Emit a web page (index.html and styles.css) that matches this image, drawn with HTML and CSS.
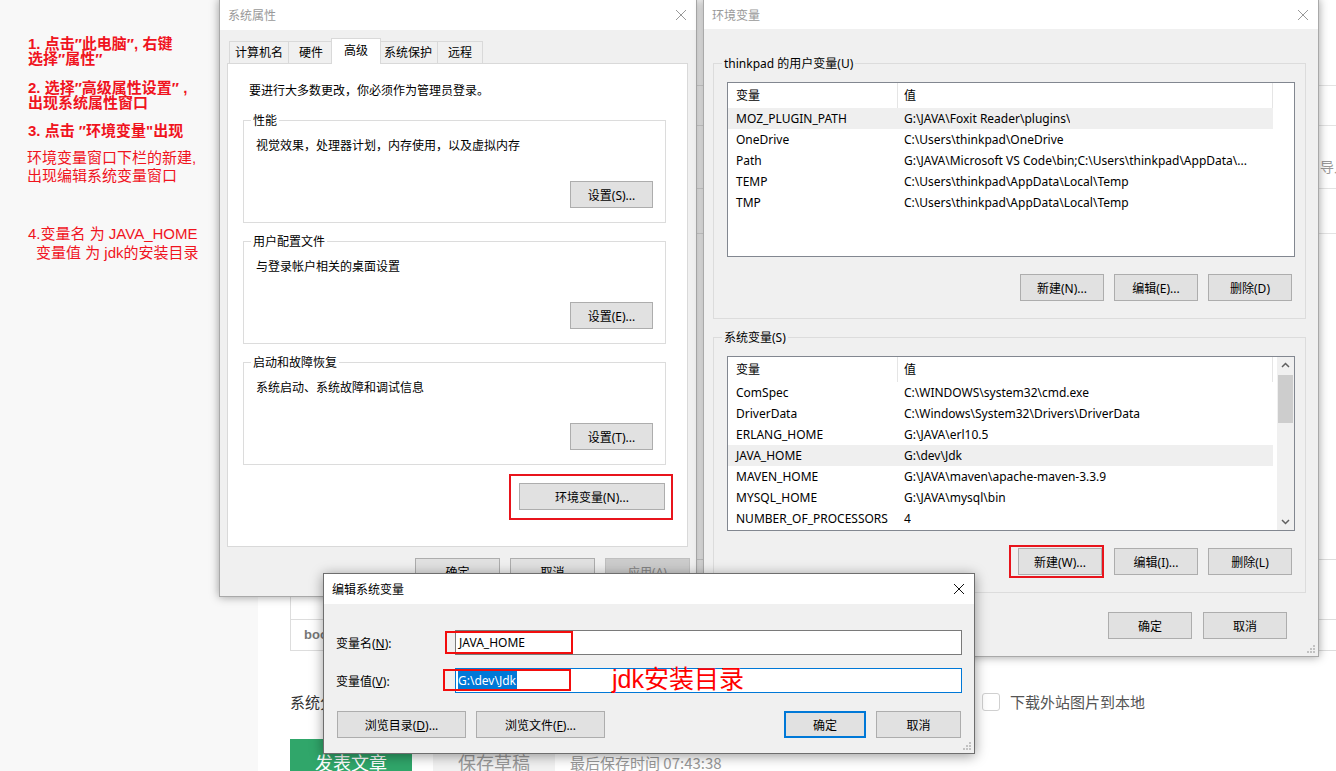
FILE: index.html
```html
<!DOCTYPE html>
<html lang="zh-CN">
<head>
    <meta charset="UTF-8">
    <title>环境变量设置步骤</title>
    <link rel="stylesheet" href="styles.css">
</head>
<body>
    <div class="page">
        <aside class="notes">
            <p class="note bold n1">1. 点击″此电脑″, 右键<br>选择″属性″</p>
            <p class="note bold n2">2. 选择″高级属性设置″ ,<br>出现系统属性窗口</p>
            <p class="note bold n3">3. 点击 ″环境变量"出现</p>
            <p class="note n4">环境变量窗口下栏的新建,<br>出现编辑系统变量窗口</p>
            <p class="note n5">4.变量名 为 JAVA_HOME<br><span class="indent">变量值 为 jdk的安装目录</span></p>
        </aside>

        <main class="editor">
            <div class="field-row r1"></div>
            <div class="field-row r2"></div>
            <div class="field-row r3"><span class="import">导入</span></div>
            <div class="field-row r4"></div>

            <div class="codebox">
                <div class="code-row top"></div>
                <div class="code-row">bootstrap</div>
            </div>

            <div class="options">
                <span class="opt-label">系统分类：</span>
                <label class="check"><span class="box"></span>下载外站图片到本地</label>
            </div>

            <div class="actions">
                <button class="publish">发表文章</button>
                <button class="draft">保存草稿</button>
                <span class="saved">最后保存时间 07:43:38</span>
            </div>
        </main>
    </div>

    <!-- 系统属性 -->
    <div class="window sysprops">
        <div class="titlebar">
            <span class="title">系统属性</span>
            <svg class="close" viewBox="0 0 10 10"><path d="M0 0L10 10M10 0L0 10"/></svg>
        </div>
        <div class="win-body">
            <div class="tabs">
                <span class="tab">计算机名</span>
                <span class="tab">硬件</span>
                <span class="tab active">高级</span>
                <span class="tab">系统保护</span>
                <span class="tab">远程</span>
            </div>
            <div class="panel">
                <p class="intro">要进行大多数更改，你必须作为管理员登录。</p>

                <div class="group">
                    <span class="legend">性能</span>
                    <p class="group-text">视觉效果，处理器计划，内存使用，以及虚拟内存</p>
                    <div class="group-btns"><button class="btn set">设置(S)...</button></div>
                </div>

                <div class="group">
                    <span class="legend">用户配置文件</span>
                    <p class="group-text">与登录帐户相关的桌面设置</p>
                    <div class="group-btns"><button class="btn set">设置(E)...</button></div>
                </div>

                <div class="group">
                    <span class="legend">启动和故障恢复</span>
                    <p class="group-text">系统启动、系统故障和调试信息</p>
                    <div class="group-btns"><button class="btn set">设置(T)...</button></div>
                </div>

                <div class="env-row">
                    <div class="mark"><button class="btn env-btn">环境变量(N)...</button></div>
                </div>
            </div>
            <div class="dlg-foot">
                <button class="btn foot">确定</button>
                <button class="btn foot">取消</button>
                <button class="btn foot disabled">应用(A)</button>
            </div>
        </div>
    </div>

    <!-- 环境变量 -->
    <div class="window envvars">
        <div class="titlebar short">
            <span class="title">环境变量</span>
            <svg class="close" viewBox="0 0 10 10"><path d="M0 0L10 10M10 0L0 10"/></svg>
        </div>
        <div class="win-body env-body">
            <div class="group gray">
                <span class="legend">thinkpad 的用户变量(U)</span>
                <div class="listbox">
                    <div class="lv">
                        <div class="lv-head"><span class="c1">变量</span><span class="c2">值</span></div>
                        <div class="lv-row sel"><span class="c1">MOZ_PLUGIN_PATH</span><span class="c2">G:\JAVA\Foxit Reader\plugins\</span></div>
                        <div class="lv-row"><span class="c1">OneDrive</span><span class="c2">C:\Users\thinkpad\OneDrive</span></div>
                        <div class="lv-row"><span class="c1">Path</span><span class="c2">G:\JAVA\Microsoft VS Code\bin;C:\Users\thinkpad\AppData\...</span></div>
                        <div class="lv-row"><span class="c1">TEMP</span><span class="c2">C:\Users\thinkpad\AppData\Local\Temp</span></div>
                        <div class="lv-row"><span class="c1">TMP</span><span class="c2">C:\Users\thinkpad\AppData\Local\Temp</span></div>
                    </div>
                </div>
                <div class="list-btns">
                    <button class="btn list">新建(N)...</button>
                    <button class="btn list">编辑(E)...</button>
                    <button class="btn list">删除(D)</button>
                </div>
            </div>

            <div class="group gray sys">
                <span class="legend">系统变量(S)</span>
                <div class="listbox">
                    <div class="lv">
                        <div class="lv-head"><span class="c1">变量</span><span class="c2">值</span></div>
                        <div class="lv-row"><span class="c1">ComSpec</span><span class="c2">C:\WINDOWS\system32\cmd.exe</span></div>
                        <div class="lv-row"><span class="c1">DriverData</span><span class="c2">C:\Windows\System32\Drivers\DriverData</span></div>
                        <div class="lv-row"><span class="c1">ERLANG_HOME</span><span class="c2">G:\JAVA\erl10.5</span></div>
                        <div class="lv-row sel"><span class="c1">JAVA_HOME</span><span class="c2">G:\dev\Jdk</span></div>
                        <div class="lv-row"><span class="c1">MAVEN_HOME</span><span class="c2">G:\JAVA\maven\apache-maven-3.3.9</span></div>
                        <div class="lv-row"><span class="c1">MYSQL_HOME</span><span class="c2">G:\JAVA\mysql\bin</span></div>
                        <div class="lv-row"><span class="c1">NUMBER_OF_PROCESSORS</span><span class="c2">4</span></div>
                    </div>
                    <div class="scrollbar">
                        <svg class="arrow" viewBox="0 0 17 17"><path d="M5 10L8.5 6.5L12 10"/></svg>
                        <div class="track"><div class="thumb"></div></div>
                        <svg class="arrow" viewBox="0 0 17 17"><path d="M5 7L8.5 10.5L12 7"/></svg>
                    </div>
                </div>
                <div class="list-btns">
                    <div class="mark small"><button class="btn list">新建(W)...</button></div>
                    <button class="btn list">编辑(I)...</button>
                    <button class="btn list">删除(L)</button>
                </div>
            </div>

            <div class="env-foot">
                <button class="btn list">确定</button>
                <button class="btn list">取消</button>
            </div>
        </div>
        <svg class="grip" viewBox="0 0 10 10"><path d="M8 2h2v2h-2zM5 5h2v2h-2zM8 5h2v2h-2zM2 8h2v2h-2zM5 8h2v2h-2zM8 8h2v2h-2z"/></svg>
    </div>

    <!-- 编辑系统变量 -->
    <div class="window editvar">
        <div class="titlebar">
            <span class="title">编辑系统变量</span>
            <svg class="close" viewBox="0 0 10 10"><path d="M0 0L10 10M10 0L0 10"/></svg>
        </div>
        <div class="win-body edit-body">
            <div class="edit-row">
                <span class="edit-label">变量名(<u>N</u>):</span>
                <div class="field">
                    JAVA_HOME
                    <span class="anno a1"></span>
                </div>
            </div>
            <div class="edit-row second">
                <span class="edit-label">变量值(<u>V</u>):</span>
                <div class="field focus">
                    <span class="selected">G:\dev\Jdk</span>
                    <span class="anno a2"></span>
                    <span class="anno-text">jdk安装目录</span>
                </div>
            </div>
            <div class="edit-foot">
                <button class="btn browse">浏览目录(<u>D</u>)...</button>
                <button class="btn browse">浏览文件(<u>F</u>)...</button>
                <span class="spacer"></span>
                <button class="btn ok">确定</button>
                <button class="btn cancel">取消</button>
            </div>
        </div>
        <svg class="grip" viewBox="0 0 10 10"><path d="M8 2h2v2h-2zM5 5h2v2h-2zM8 5h2v2h-2zM2 8h2v2h-2zM5 8h2v2h-2zM8 8h2v2h-2z"/></svg>
    </div>
</body>
</html>
```

FILE: styles.css
```css
body {
    margin: 0;
    width: 1336px;
    height: 771px;
    overflow: hidden;
    position: relative;
    background: #fff;
    font-family: "Noto Sans CJK SC", sans-serif;
}

p {
    margin: 0;
}

/* ---- page behind the dialogs ---- */

.page {
    display: flex;
    height: 771px;
}

.notes {
    width: 258px;
    flex: none;
    background: #f8f8f8;
    color: #f0141e;
    font-family: "Liberation Sans", "Noto Sans CJK SC", sans-serif;
    font-size: 15px;
    padding: 36px 0 0 28px;
    box-sizing: border-box;
}

.note.bold {
    font-weight: bold;
}

.n1 { line-height: 15px; }
.n2 { line-height: 15px; margin-top: 14px; }
.n3 { line-height: 15px; margin-top: 13px; }
.n4 { line-height: 18px; margin-top: 11px; margin-left: -1px; }
.n5 { line-height: 19px; margin-top: 39px; }

.indent {
    padding-left: 8px;
}

.editor {
    flex: 1;
    padding-left: 32px;
    display: flex;
    flex-direction: column;
}

.editor > * {
    flex-shrink: 0;
}

.field-row {
    border-bottom: 1px solid #e3e3e3;
    box-sizing: border-box;
    display: flex;
    justify-content: flex-end;
}

.r1 { height: 86px; }
.r2 { height: 40px; }
.r3 { height: 63px; padding-top: 30px; }
.r4 { height: 45px; }

.import {
    color: #999;
    font-size: 14px;
    line-height: 20px;
    margin-right: -12px;
}

.codebox {
    margin-top: 325px;
    border: 1px solid #ddd;
    border-right: 0;
}

.code-row {
    height: 30px;
    line-height: 30px;
    padding-left: 13px;
    color: #777;
    font-family: "Liberation Sans", sans-serif;
    font-size: 13px;
    font-weight: bold;
}

.code-row.top {
    height: 59px;
    border-bottom: 1px solid #ddd;
}

.options {
    display: grid;
    grid-template-columns: 692px auto;
    margin-top: 41px;
    line-height: 20px;
}

.opt-label {
    color: #333;
    font-size: 15px;
}

.check {
    display: flex;
    align-items: center;
    color: #555;
    font-size: 15px;
}

.check .box {
    width: 18px;
    height: 18px;
    border: 1px solid #d0d0d0;
    border-radius: 3px;
    box-sizing: border-box;
    margin-right: 10px;
    background: #fff;
}

.actions {
    display: flex;
    align-items: center;
    margin-top: 27px;
}

.actions button {
    width: 122px;
    height: 46px;
    border: none;
    font-family: inherit;
    font-size: 18px;
    padding: 0;
}

.publish {
    background: #30a66a;
    color: #fff;
}

.draft {
    margin-left: 21px;
    background: #f2f2f2;
    color: #999;
}

.saved {
    margin-left: 15px;
    color: #999;
    font-size: 15px;
}

/* ---- windows ---- */

.window {
    position: absolute;
    background: #f0f0f0;
    border: 1px solid #a9a9a9;
    box-sizing: border-box;
    box-shadow: 0 0 9px rgba(0, 0, 0, 0.38);
    font-family: "Noto Sans", "Noto Sans CJK SC", sans-serif;
    font-size: 12px;
    color: #000;
}

.sysprops {
    left: 219px;
    top: -1px;
    width: 478px;
    height: 598px;
}

.envvars {
    left: 703px;
    top: -1px;
    width: 616px;
    height: 658px;
}

.editvar {
    left: 323px;
    top: 573px;
    width: 652px;
    border-color: #6e6e6e;
    box-shadow: 0 2px 12px rgba(0, 0, 0, 0.4);
}

.titlebar {
    height: 30px;
    background: #fff;
    display: flex;
    align-items: center;
    padding-left: 8px;
}

.titlebar.short {
    height: 29px;
}

.title {
    flex: 1;
    color: #999;
}

.editvar .title {
    color: #000;
}

.close {
    width: 10px;
    height: 10px;
    margin-right: 10px;
    stroke: #999;
    stroke-width: 1;
    fill: none;
}

.editvar .close {
    stroke: #111;
}

.grip {
    position: absolute;
    right: 3px;
    bottom: 3px;
    width: 10px;
    height: 10px;
    fill: #c2c2c2;
}

.win-body {
    padding: 0 8px 0 7px;
}

/* tabs */

.tabs {
    display: flex;
    align-items: flex-end;
    height: 25px;
    margin: 8px 0 0 2px;
    line-height: 16px;
}

.tab {
    min-width: 46px;
    height: 22px;
    padding: 0 5px;
    box-sizing: border-box;
    border: 1px solid #d9d9d9;
    border-bottom: 0;
    margin-left: -1px;
    background: #f0f0f0;
    display: flex;
    align-items: center;
    justify-content: center;
}

.tab:first-child {
    margin-left: 0;
}

.tab.active {
    height: 26px;
    margin: 0 -2px -1px -3px;
    background: #fff;
    position: relative;
    z-index: 1;
    align-items: flex-start;
    padding-top: 4px;
    min-width: 50px;
}

.panel {
    width: 461px;
    height: 484px;
    box-sizing: border-box;
    background: #fff;
    border: 1px solid #d9d9d9;
}

.intro {
    margin: 19px 0 0 21px;
    line-height: 16px;
}

.group {
    border: 1px solid #dcdcdc;
    padding: 0 12px 14px;
    background: #fff;
    line-height: 16px;
}

.panel .group {
    margin: 21px 21px 0 15px;
}

.panel .group + .group {
    margin-top: 18px;
}

.legend {
    display: table;
    margin: -8px 0 0 -5px;
    padding: 0 2px;
    background: inherit;
    line-height: 16px;
}

.group-text {
    margin-top: 9px;
}

.group-btns {
    display: flex;
    justify-content: flex-end;
    margin-top: 27px;
}

.btn {
    height: 27px;
    padding: 0;
    border: 1px solid #adadad;
    background: #e1e1e1;
    box-sizing: border-box;
    font-family: inherit;
    font-size: 12px;
    color: #000;
}

.btn.set { width: 83px; }
.btn.env-btn { width: 146px; }
.btn.foot { width: 85px; }
.btn.list { width: 84px; }

.btn.disabled {
    background: #cccccc;
    border-color: #bfbfbf;
    color: #838383;
}

.env-row {
    display: flex;
    justify-content: flex-end;
    margin: 9px 14px 0 0;
}

.mark {
    border: 2px solid #e8141c;
    padding: 7px 6px 8px 8px;
}

.mark.small {
    padding: 1px 0 1px 7px;
    margin: -3px 0 -3px -9px;
}

.dlg-foot {
    display: flex;
    justify-content: flex-end;
    gap: 10px;
    margin: 11px -2px 0 0;
}

/* environment variables */

.env-body {
    padding: 0 12px 17px 9px;
}

.group.gray {
    background: #f0f0f0;
    margin-top: 34px;
    padding: 0 10px 17px 13px;
}

.group.gray.sys {
    margin-top: 18px;
}

.listbox {
    margin-top: 10px;
    height: 175px;
    box-sizing: border-box;
    border: 1px solid #828790;
    background: #fff;
    display: flex;
    overflow: hidden;
}

.lv {
    width: 545px;
}

.lv-head,
.lv-row {
    display: flex;
    white-space: nowrap;
}

.lv-head {
    height: 25px;
    align-items: center;
    border-right: 1px solid #e5e5e5;
}

.lv-row {
    height: 21px;
    align-items: center;
}

.lv-row.sel {
    background: #efefef;
}

.c1 {
    width: 170px;
    flex: none;
    padding-left: 8px;
    box-sizing: border-box;
    overflow: hidden;
}

.lv-head .c1 {
    border-right: 1px solid #e5e5e5;
    height: 25px;
    line-height: 25px;
}

.c2 {
    padding-left: 6px;
    overflow: hidden;
}

.scrollbar {
    width: 17px;
    margin-left: auto;
    background: #f0f0f0;
    display: flex;
    flex-direction: column;
}

.arrow {
    width: 17px;
    height: 17px;
    flex: none;
    fill: none;
    stroke: #606060;
    stroke-width: 1.5;
}

.track {
    flex: 1;
}

.thumb {
    height: 48px;
    margin: 1px 0 0 1px;
    width: 15px;
    background: #cdcdcd;
}

.list-btns {
    display: flex;
    justify-content: flex-end;
    gap: 10px;
    margin: 17px 3px 0 0;
}

.env-foot {
    display: flex;
    justify-content: flex-end;
    gap: 11px;
    margin: 19px 19px 0 0;
}

/* edit dialog */

.edit-body {
    padding: 26px 12px 15px 12px;
}

.edit-row {
    display: flex;
    align-items: center;
}

.edit-row.second {
    margin-top: 13px;
}

.edit-label {
    width: 119px;
    flex: none;
}

.field {
    position: relative;
    flex: 1;
    height: 25px;
    box-sizing: border-box;
    border: 1px solid #7a7a7a;
    background: #fff;
    padding-left: 3px;
    display: flex;
    align-items: center;
    white-space: nowrap;
}

.field.focus {
    border-color: #0078d7;
    padding-left: 2px;
}

.selected {
    background: #0078d7;
    color: #fff;
    line-height: 19px;
    padding-right: 1px;
}

.anno {
    position: absolute;
    border: 2px solid #f20d0d;
    box-sizing: border-box;
    width: 128px;
}

.anno.a1 {
    left: -11px;
    top: 0;
    height: 23px;
}

.anno.a2 {
    left: -13px;
    top: 0;
    height: 22px;
}

.anno-text {
    position: absolute;
    left: 156px;
    top: -4px;
    color: #ff0000;
    font-family: "Liberation Sans", "Noto Sans CJK SC", sans-serif;
    font-size: 25px;
    line-height: 28px;
}

.edit-foot {
    display: flex;
    gap: 10px;
    margin: 18px 1px 0 1px;
}

.spacer {
    flex: 1;
}

.btn.browse { width: 129px; }
.btn.ok { width: 82px; border: 2px solid #0078d7; }
.btn.cancel { width: 85px; }
```
